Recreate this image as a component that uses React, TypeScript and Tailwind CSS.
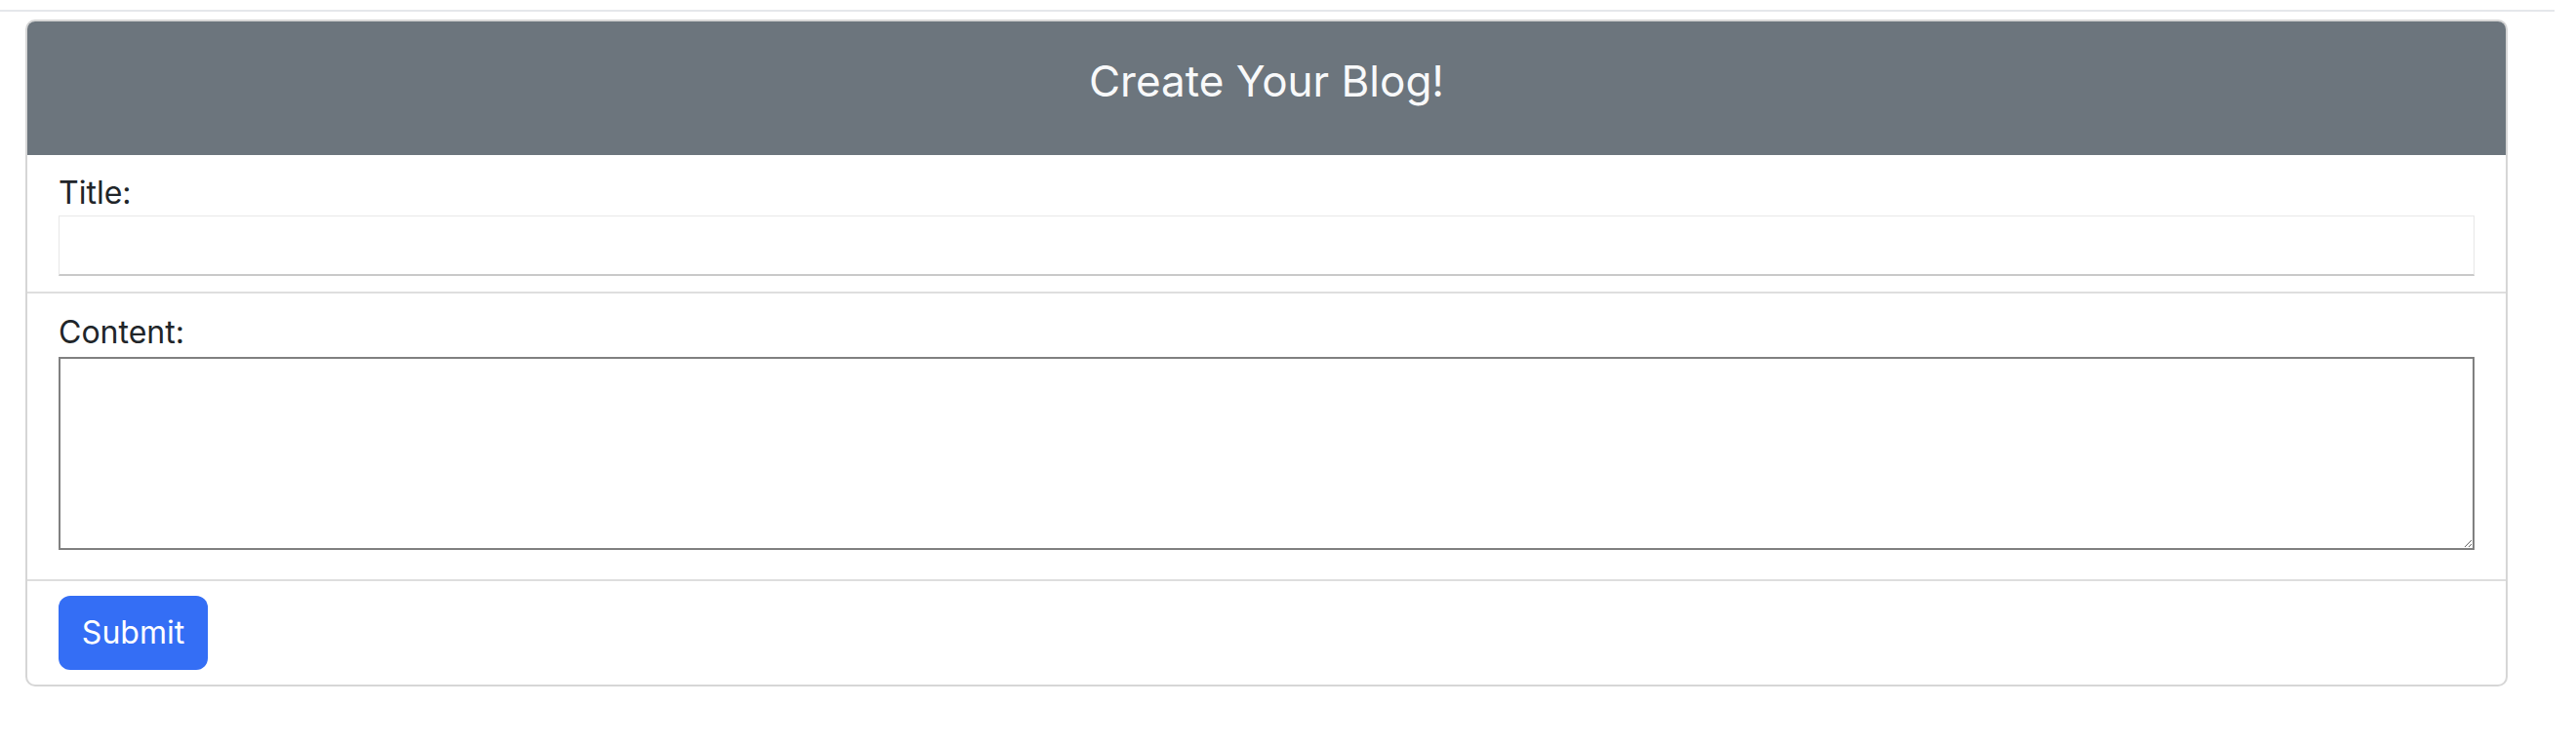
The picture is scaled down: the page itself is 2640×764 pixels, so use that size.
import React, { useState } from "react";

function App() {
  const [title, setTitle] = useState("");
  const [content, setContent] = useState("");

  const handleSubmit = (e: React.FormEvent<HTMLFormElement>) => {
    e.preventDefault();
  };

  return (
    <div className="min-h-screen bg-white font-['Inter',sans-serif] text-[#212529]">
      {/* nav strip */}
      <div className="h-[12px] w-[2618px] border-b-2 border-[#e5e7eb]" />

      <form
        onSubmit={handleSubmit}
        className="ml-[26px] mt-[8px] w-[2544px] overflow-hidden rounded-[10px] border-2 border-[#d6d6d6]"
      >
        <div className="h-[137px] bg-[#6c757d] pt-[35px] text-center text-[44px] leading-[53px] text-[#f8f9fa]">
          Create Your Blog!
        </div>

        <div className="border-b-2 border-[#dedede] px-[32px] pb-[16px] pt-[16px]">
          <label className="block text-[32px] leading-[46px]">Title:</label>
          <input
            value={title}
            onChange={(e) => setTitle(e.target.value)}
            type="text"
            className="block h-[62px] w-full border border-b-2 border-[#e8e8e8] border-b-[#c9c9c9] px-3 text-[32px] outline-none"
          />
        </div>

        <div className="border-b-2 border-[#dedede] px-[32px] pb-[30px] pt-[16px]">
          <label className="block text-[32px] leading-[48px]">Content:</label>
          <textarea
            value={content}
            onChange={(e) => setContent(e.target.value)}
            className="mt-[1px] block h-[198px] w-full border-2 border-[#808080] p-2 text-[32px] outline-none"
          />
        </div>

        <div className="px-[32px] pb-[15px] pt-[15px]">
          <button
            type="submit"
            className="flex h-[76px] w-[153px] items-center justify-center rounded-[12px] bg-[#346ef5] text-[32px] text-white"
          >
            Submit
          </button>
        </div>
      </form>
    </div>
  );
}

export default App;
